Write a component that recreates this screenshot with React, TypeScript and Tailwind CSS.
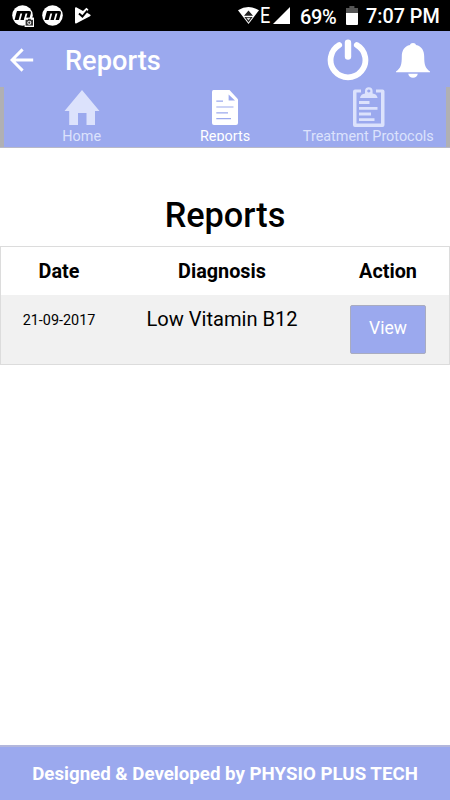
import React from 'react';

const MotoIcon = ({ camera = false }: { camera?: boolean }) => (
  <svg width="22" height="22" viewBox="0 0 22 22" className="shrink-0">
    <circle cx="10.5" cy="10.5" r="10.3" fill="#fff" />
    <path
      d="M5 6H17Q19.4 6 18.8 8.4L17 15H13.6L15.4 8.6H13.6L11.8 15H8.4L10.2 8.6H8.4L6.6 15H2.6L4.2 8.6z"
      fill="#000"
    />
    {camera && (
      <g>
        <rect x="12.6" y="12.6" width="9.4" height="9.4" fill="#fff" />
        <rect x="13.6" y="14.8" width="7.4" height="5.8" fill="#333" />
        <rect x="16" y="13.8" width="2.8" height="2" fill="#333" />
        <circle cx="17.3" cy="17.7" r="2" fill="#fff" />
        <circle cx="17.3" cy="17.7" r="1.1" fill="#333" />
      </g>
    )}
  </svg>
);

const PlayCheckIcon = () => (
  <svg width="17" height="17" viewBox="0 0 17 17" className="shrink-0">
    <path d="M1.2.2Q0 0 0 1.4V15.2Q0 17 1.6 16.2L15 9.2Q16.6 8.2 15 7.4L12 5.8 13.4 2.6 11.4.8 8 4z" fill="#fff" />
    <path d="m4 6.6 3.4 3L12.4 3.6" fill="none" stroke="#000" strokeWidth="2" />
  </svg>
);

const WifiIcon = () => (
  <svg width="21" height="17" viewBox="0 0 21 17" className="shrink-0">
    <path d="M0 3.2Q10.5-3 21 3.2L10.5 17z" fill="#fff" />
    <path d="M6 8.8 10.5 3.4 15 8.8zM6.4 10H14.6L10.5 15.4z" fill="#222" />
    <path d="M8.4 10.8h4.2l-2.1 2.8z" fill="#ddd" />
  </svg>
);

const BatteryIcon = () => (
  <svg width="12" height="19" viewBox="0 0 12 19" className="shrink-0">
    <path d="M3.4 0h5v2H12v5H0V2h3.4z" fill="#555" />
    <path d="M0 7h12v11q0 1-1 1H1q-1 0-1-1z" fill="#fff" />
  </svg>
);

const BackIcon = () => (
  <svg width="24" height="24" viewBox="0 0 24 24" fill="none" stroke="#fff" strokeWidth="3">
    <path d="M23.2 12H2.5M12.6 1.4 2 12 12.6 22.6" />
  </svg>
);

const PowerIcon = () => (
  <svg width="42" height="42" viewBox="0 0 42 42" fill="none" stroke="#fff" strokeLinecap="round">
    <path d="M12.2 6A17.4 17.4 0 1 0 29.8 6" strokeWidth="5.8" />
    <path d="M21 3.7V17.6" strokeWidth="6.4" />
  </svg>
);

const BellIcon = () => (
  <svg width="34" height="36" viewBox="0 0 34 36" fill="#fff">
    <path d="M17 0C15.4 0 14.2.8 14 2.1 8.2 3.3 5.8 8 5.8 13.5 5.8 21.5 4.8 25.2 0 28.4V29.2H34V28.4C29.2 25.2 28.2 21.5 28.2 13.5 28.2 8 25.8 3.3 20 2.1 19.8.8 18.6 0 17 0z" />
    <path d="M12.2 30.8h9.6c-.5 2.7-2.3 4-4.8 4s-4.3-1.3-4.8-4z" />
  </svg>
);

const HomeIcon = () => (
  <svg width="36" height="36" viewBox="0 0 36 36" fill="currentColor">
    <path d="M18 0 35.5 21H31V35H22.5V23H14V35H5.2V21H.5z" />
  </svg>
);

const DocumentIcon = () => (
  <svg width="28" height="36" viewBox="0 0 28 36">
    <path d="M2.5 0H18.5L27 9.3V33Q27 35 25 35H3Q1 35 1 33V2Q1 0 2.5 0z" fill="currentColor" />
    <path d="M17.6 4.4V10.4H24z" fill="#9ba9ee" />
    <path d="M5.3 11.1H12M5.3 17H22.5M5.3 22.8H17M5.3 28.6H20" stroke="#9ba9ee" strokeWidth="1.2" />
  </svg>
);

const ClipboardIcon = () => (
  <svg width="33" height="41" viewBox="0 0 33 41">
    <path
      d="M9 2.5H3Q1 2.5 1 4.5V38Q1 40 3 40H30.5Q32.5 40 32.5 38V4.5Q32.5 2.5 30.5 2.5H24V5.5H29V36.6H4.5V5.5H9z"
      fill="currentColor"
    />
    <path
      fillRule="evenodd"
      d="M8 11C8.4 8 10.5 6.8 13 6.4V4A3.8 3.8 0 0 1 20.6 4V6.4C23.2 6.8 25.2 8 25.6 11zM16.8 2.4a1.6 1.6 0 1 0 .01 0z"
      fill="currentColor"
    />
    <path d="M7 15.5H17.5M7 21.3H25.5M7 27H19M7 32.7H22.5" stroke="currentColor" strokeWidth="2.8" />
  </svg>
);

const tabs = [
  { id: 'home', label: 'Home', icon: HomeIcon },
  { id: 'reports', label: 'Reports', icon: DocumentIcon },
  { id: 'protocols', label: 'Treatment Protocols', icon: ClipboardIcon },
];

const reports = [{ date: '21-09-2017', diagnosis: 'Low Vitamin B12' }];

const StatusBar = () => (
  <div className="flex h-[31px] shrink-0 items-center bg-black pl-3 pr-[10px] text-[20px] font-medium leading-none text-white">
    <MotoIcon camera />
    <div className="ml-2 flex items-center gap-[11px]">
      <MotoIcon />
      <PlayCheckIcon />
    </div>
    <div className="ml-auto flex items-center">
      <WifiIcon />
      <span className="ml-[1px] w-[10px] origin-left scale-x-[0.82] pt-px text-[22px] font-normal">E</span>
      <svg width="17" height="17" viewBox="0 0 17 17" className="ml-[3px]">
        <path d="M17 0V17H0z" fill="#fff" />
      </svg>
      <span className="ml-[10px] w-[36px] whitespace-nowrap pt-[3px] text-[20px] tracking-[-0.4px]">69%</span>
      <div className="ml-[10px]">
        <BatteryIcon />
      </div>
      <span className="ml-[8px] w-[74px] whitespace-nowrap pt-[3px] text-[19.8px]">7:07 PM</span>
    </div>
  </div>
);

const App: React.FC = () => {
  const activeTab = 'reports';

  return (
    <div className="flex h-[800px] w-[450px] flex-col overflow-hidden bg-white font-[Roboto,sans-serif] text-black">
      <StatusBar />

      <header className="h-[117px] shrink-0 border-b border-[#b8b9c8] bg-[#9ba9ee] text-white">
        <div className="flex h-[56px] items-center pl-[10px] pr-[20px]">
          <div className="pt-[1px]">
            <BackIcon />
          </div>
          <h1 className="ml-[31px] pt-[3px] text-[27.2px] font-medium leading-8">Reports</h1>
          <div className="ml-auto pt-[2px]">
            <PowerIcon />
          </div>
          <div className="ml-[27px] pt-[3px]">
            <BellIcon />
          </div>
        </div>
        <nav className="flex h-[60px] border-x-[4px] border-[#b0b0b3] px-[6px]">
          {tabs.map((tab) => (
            <button
              key={tab.id}
              className={
                tab.id === activeTab
                  ? 'flex flex-1 flex-col items-center text-white'
                  : 'flex flex-1 flex-col items-center text-[#dce2fc]'
              }
            >
              <span className="flex h-[41px] items-center">
                <tab.icon />
              </span>
              <span
                className={
                  tab.id === activeTab
                    ? 'h-[13px] overflow-hidden whitespace-nowrap text-[14.4px] leading-[17px]'
                    : 'whitespace-nowrap text-[14.4px] leading-[17px]'
                }
              >
                {tab.label}
              </span>
            </button>
          ))}
        </nav>
      </header>

      <main className="flex-1 pt-[44px]">
        <h2 className="h-[54px] text-center text-[34.3px] font-medium leading-[46px]">Reports</h2>
        <table className="w-full table-fixed border-separate border-spacing-0 border border-[#dcdcdc] text-center">
          <colgroup>
            <col className="w-[116px]" />
            <col className="w-[210px]" />
            <col className="w-[122px]" />
          </colgroup>
          <thead>
            <tr className="h-[48px] text-[19.8px]">
              <th className="pt-[2px] font-bold">Date</th>
              <th className="pt-[2px] font-bold">Diagnosis</th>
              <th className="pt-[2px] font-bold">Action</th>
            </tr>
          </thead>
          <tbody>
            {reports.map((report) => (
              <tr key={report.date} className="h-[69px] bg-[#f1f1f1] align-top">
                <td className="pt-[15px] text-[14.4px] leading-[22px]">{report.date}</td>
                <td className="pt-[11px] text-[20.1px] leading-[26px]">{report.diagnosis}</td>
                <td className="pt-[10px]">
                  <button className="mx-auto block h-[49px] w-[76px] rounded-[2px] border border-[#a9acc0] bg-[#9ba9ee] pb-[3px] text-[17.5px] text-white">
                    View
                  </button>
                </td>
              </tr>
            ))}
          </tbody>
        </table>
      </main>

      <footer className="flex h-[55px] shrink-0 items-center justify-center whitespace-nowrap border-t-2 border-[#b3b7dc] bg-[#9ba9ee] pt-[2px] text-[18.7px] font-bold text-white">
        Designed &amp; Developed by PHYSIO PLUS TECH
      </footer>
    </div>
  );
};

export default App;
